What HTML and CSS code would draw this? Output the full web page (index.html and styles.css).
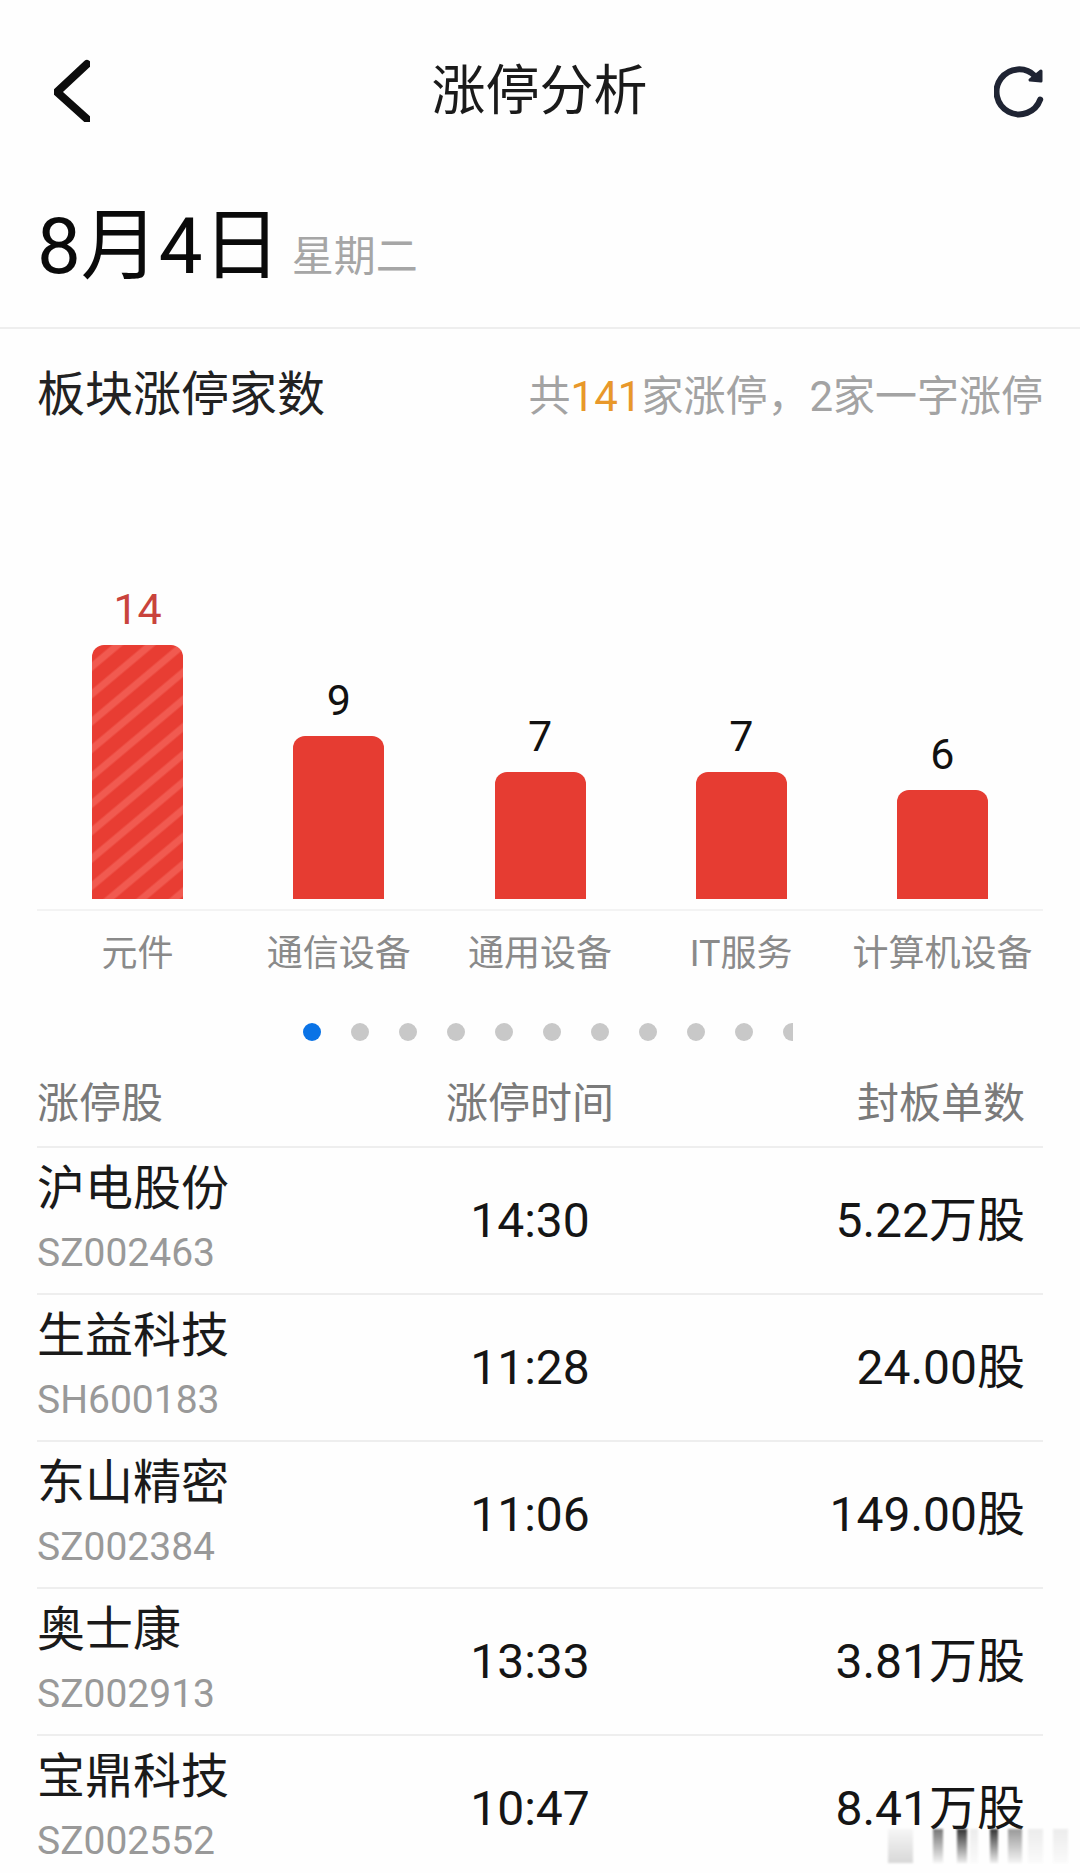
FILE: index.html
```html
<!DOCTYPE html>
<html lang="zh-CN">
<head>
  <meta charset="utf-8">
  <title>涨停分析</title>
  <link rel="stylesheet" href="styles.css">
</head>
<body>

<div class="page">

  <!-- top bar -->
  <div class="topbar">
    <svg class="icon-back" viewBox="0 0 36 64"><path d="M33 6 L3 34 L33 61" /></svg>
    <h1>涨停分析</h1>
    <svg class="icon-refresh" viewBox="0 0 52 52">
      <path class="arc" d="M46.2 33.5 A22.5 22.5 0 1 1 41 10" />
      <path class="head" d="M47 5 L36 14 L47 15 Z" />
    </svg>
  </div>

  <div class="date-row">
    <span class="date">8月4日</span>
    <span class="weekday">星期二</span>
  </div>

  <!-- sector chart -->
  <div class="section-head">
    <h2>板块涨停家数</h2>
    <div class="summary">共<span class="hl">141</span>家涨停，2家一字涨停</div>
  </div>

  <div class="chart">
    <div class="col">
      <div class="val val-top">14</div>
      <div class="bar bar-top" style="height: 254px"></div>
    </div>
    <div class="col">
      <div class="val">9</div>
      <div class="bar" style="height: 163px"></div>
    </div>
    <div class="col">
      <div class="val">7</div>
      <div class="bar" style="height: 127px"></div>
    </div>
    <div class="col">
      <div class="val">7</div>
      <div class="bar" style="height: 127px"></div>
    </div>
    <div class="col">
      <div class="val">6</div>
      <div class="bar" style="height: 109px"></div>
    </div>
  </div>

  <div class="labels">
    <div>元件</div>
    <div>通信设备</div>
    <div>通用设备</div>
    <div>IT服务</div>
    <div>计算机设备</div>
  </div>

  <div class="dots">
    <div class="dots-inner">
      <i class="on"></i><i></i><i></i><i></i><i></i><i></i><i></i><i></i><i></i><i></i><i></i>
    </div>
  </div>

  <!-- stock table -->
  <div class="row row-head">
    <div>涨停股</div>
    <div class="c-time">涨停时间</div>
    <div class="c-num">封板单数</div>
  </div>

  <div class="row">
    <div class="stock"><div class="name">沪电股份</div><div class="code">SZ002463</div></div>
    <div class="c-time">14:30</div>
    <div class="c-num">5.22万股</div>
  </div>
  <div class="row">
    <div class="stock"><div class="name">生益科技</div><div class="code">SH600183</div></div>
    <div class="c-time">11:28</div>
    <div class="c-num">24.00股</div>
  </div>
  <div class="row">
    <div class="stock"><div class="name">东山精密</div><div class="code">SZ002384</div></div>
    <div class="c-time">11:06</div>
    <div class="c-num">149.00股</div>
  </div>
  <div class="row">
    <div class="stock"><div class="name">奥士康</div><div class="code">SZ002913</div></div>
    <div class="c-time">13:33</div>
    <div class="c-num">3.81万股</div>
  </div>
  <div class="row">
    <div class="stock"><div class="name">宝鼎科技</div><div class="code">SZ002552</div></div>
    <div class="c-time">10:47</div>
    <div class="c-num">8.41万股</div>
  </div>

  <!-- blurred watermark, bottom right -->
  <div class="watermark"><i></i><i></i><i></i><i></i><i></i><i></i><i></i><i></i></div>
</div>

</body>
</html>
```

FILE: styles.css
```css
html, body {
  margin: 0;
  padding: 0;
}
body {
  font-family: Roboto, "Noto Sans CJK SC", sans-serif;
  background-color: #fefefe;
  color: #111;
}
.page {
  position: relative;
  width: 1080px;
  height: 1873px;
  overflow: hidden;
}
h1, h2 {
  margin: 0;
  font-weight: 400;
}

.topbar {
  height: 180px;
  display: flex;
  align-items: center;
  justify-content: space-between;
  padding: 0 34px 0 54px;
}
.topbar h1 {
  font-size: 54px;
  color: #1a1a1a;
  margin: 0 5px 8px 0;
}
.icon-back {
  width: 36px;
  height: 64px;
  fill: none;
  stroke: #0c0c0c;
  stroke-width: 8;
  stroke-linecap: round;
  stroke-linejoin: round;
}
.icon-refresh {
  width: 52px;
  height: 52px;
  margin-top: 4px;
}
.icon-refresh .arc {
  fill: none;
  stroke: #1f2433;
  stroke-width: 6;
  stroke-linecap: round;
}
.icon-refresh .head {
  fill: #1f2433;
  stroke: #1f2433;
  stroke-width: 3;
  stroke-linejoin: round;
}

.date-row {
  height: 149px;
  box-sizing: border-box;
  padding: 0 37px 30px;
  display: flex;
  align-items: center;
  gap: 11px;
  border-bottom: 2px solid #eeeeee;
}
.date {
  font-size: 78px;
  color: #0a0a0a;
}
.weekday {
  font-size: 42px;
  color: #a6a6a6;
  margin-top: 28px;
}

.section-head {
  height: 120px;
  padding: 0 37px;
  display: flex;
  align-items: center;
  justify-content: space-between;
}
.section-head h2 {
  font-size: 48px;
  color: #222;
  margin-top: 2px;
}
.summary {
  font-size: 42px;
  color: #a3a3a3;
  margin-top: 6px;
}
.summary .hl {
  color: #e8982a;
}

.chart {
  height: 462px;
  margin: 0 37px;
  padding-bottom: 10px;
  box-sizing: border-box;
  display: flex;
  align-items: flex-end;
  border-bottom: 2px solid #f3f3f3;
}
.col {
  flex: 1;
  display: flex;
  flex-direction: column;
  align-items: center;
}
.val {
  font-size: 43px;
  line-height: 48px;
  margin-bottom: 12px;
  color: #111;
}
.val-top {
  color: #c9433c;
}
.bar {
  width: 91px;
  background-color: #e63c32;
  border-radius: 12px 12px 0 0;
}
.bar-top {
  background-image: repeating-linear-gradient(140deg, #e83d33 0, #e83d33 12px, #f15a50 14px, #f15a50 19px, #e83d33 21px);
}

.labels {
  height: 80px;
  box-sizing: border-box;
  padding-bottom: 2px;
  margin: 0 37px;
  display: flex;
  align-items: center;
  font-size: 36px;
  color: #8a8a8a;
}
.labels div {
  flex: 1;
  text-align: center;
}

.dots {
  height: 82px;
  padding-left: 303px;
  display: flex;
  align-items: center;
}
.dots-inner {
  width: 490px;
  display: flex;
  gap: 30px;
  overflow: hidden;
}
.dots i {
  flex: none;
  width: 18px;
  height: 18px;
  border-radius: 50%;
  background-color: #c8c8c8;
}
.dots i.on {
  background-color: #0a73e6;
}

.row {
  height: 147px;
  box-sizing: border-box;
  margin: 0 37px;
  display: grid;
  grid-template-columns: 320px 346px 1fr;
  align-items: center;
  font-size: 48px;
  line-height: 60px;
  color: #151515;
  border-bottom: 2px solid #eeeeee;
}
.row-head {
  height: 75px;
  padding-bottom: 12px;
  font-size: 42px;
  color: #7a7a7a;
}
.c-time {
  text-align: center;
}
.c-num {
  text-align: right;
  padding-right: 18px;
}
.stock {
  padding-bottom: 10px;
}
.name {
  font-size: 48px;
  line-height: 66px;
  color: #1a1a1a;
}
.code {
  font-size: 39px;
  line-height: 46px;
  margin-top: 8px;
  color: #999;
}

.watermark {
  position: absolute;
  left: 888px;
  top: 1829px;
  height: 34px;
  display: flex;
  filter: blur(1px);
}
.watermark i {
  width: 15px;
  margin-right: 10px;
  background: linear-gradient(#ececec, #fafafa);
}
.watermark i:nth-child(1) {
  width: 25px;
  margin-right: 20px;
  background: linear-gradient(#f6f6f6, #d8d8d8);
}
.watermark i:nth-child(2) {
  width: 10px;
  margin-right: 14px;
  background: linear-gradient(#777, #f4f4f4);
}
.watermark i:nth-child(3) {
  width: 10px;
  margin-right: 3px;
  background: linear-gradient(#333, #eee);
}
.watermark i:nth-child(4) {
  width: 8px;
  margin-right: 12px;
}
.watermark i:nth-child(5) {
  width: 8px;
  background: linear-gradient(#333, #eee);
}
.watermark i:nth-child(6) {
  width: 14px;
  margin-right: 6px;
  background: linear-gradient(#999, #f4f4f4);
}
```
